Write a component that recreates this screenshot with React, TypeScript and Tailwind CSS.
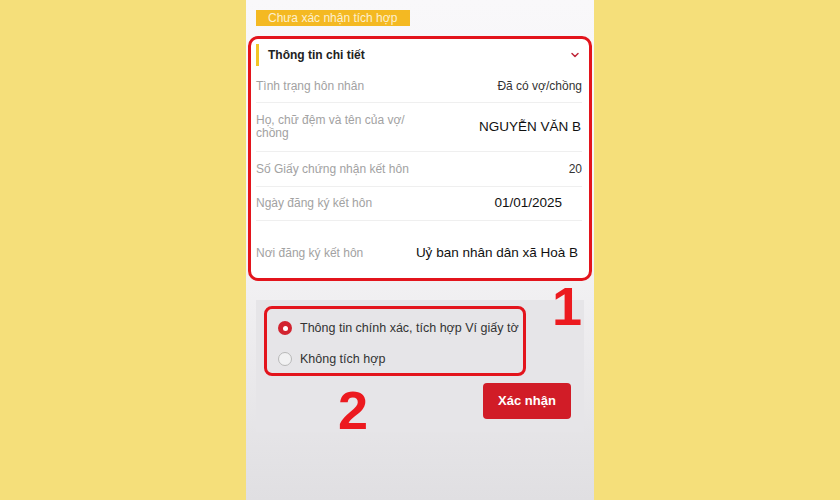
import { FiChevronDown } from "react-icons/fi";

const rows = [
  { label: "Tình trạng hôn nhân", value: "Đã có vợ/chồng", h: "h-[33px]", vc: "text-[12px] text-[#333]" },
  { label: "Họ, chữ đệm và tên của vợ/ chồng", value: "NGUYỄN VĂN B", h: "h-[49px]", vc: "text-[13.5px] text-[#111] pr-[1px]" },
  { label: "Số Giấy chứng nhận kết hôn", value: "20", h: "h-[35px]", vc: "text-[12px] text-[#333]" },
  { label: "Ngày đăng ký kết hôn", value: "01/01/2025", h: "h-[34px]", vc: "text-[13.5px] text-[#111] pr-[20px]" },
];

const Radio = ({ checked, label }: { checked?: boolean; label: string }) => (
  <div className="h-[16px] flex items-center gap-[8px]">
    {checked ? (
      <span className="w-[14px] h-[14px] rounded-full bg-[#d2232f] flex items-center justify-center">
        <span className="w-[5px] h-[5px] rounded-full bg-white" />
      </span>
    ) : (
      <span className="w-[14px] h-[14px] rounded-full border border-[#b8b8b8] bg-[#f1f1f2]" />
    )}
    <span className="text-[12.5px] text-[#333]">{label}</span>
  </div>
);

const App = () => {
  return (
    <div
      className="w-[840px] h-[500px] bg-[#f5df7a] flex justify-center"
      style={{ fontFamily: '"Liberation Sans", "Noto Sans", sans-serif' }}
    >
      <div className="relative w-[348px] h-full bg-gradient-to-b from-[#f9f8fa] via-[#f4f3f5] to-[#e0dfe2] flex flex-col">
        <div className="ml-[10px] mt-[10px] w-[154px] h-[16px] bg-[#f4b922] text-[12px] leading-[16px] text-[#fdf0cf] pl-[12px]">
          Chưa xác nhận tích hợp
        </div>

        {/* khung 1 */}
        <div className="mx-[2px] mt-[10px] h-[245px] rounded-[10px] border-[3px] border-[#e3141c] bg-white flex flex-col pl-[5px]">
          <div className="h-[32px] flex items-center">
            <span className="w-[3px] h-[22px] bg-[#f2c526]" />
            <span className="ml-[9px] text-[12px] font-bold text-[#222] flex-1">Thông tin chi tiết</span>
            <FiChevronDown className="text-[#c0283a] mr-[8px]" size={12} strokeWidth={3} />
          </div>
          <div className="mr-[7px] flex flex-col">
            {rows.map((r) => (
              <div key={r.label} className={`${r.h} flex items-center justify-between border-b border-[#efefef]`}>
                <span className="w-[155px] text-[12px] leading-[13px] text-[#a2a2a2]">{r.label}</span>
                <span className={r.vc}>{r.value}</span>
              </div>
            ))}
            <div className="h-[57px] flex items-center justify-between pt-[7px]">
              <span className="text-[12px] text-[#a2a2a2]">Nơi đăng ký kết hôn</span>
              <span className="text-[13.5px] text-[#111] pr-[4px]">Uỷ ban nhân dân xã Hoà B</span>
            </div>
          </div>
        </div>

        {/* khung 2 */}
        <div className="mx-[10px] mt-[19px] h-[132px] bg-[#e6e5e8] pt-[6px] pl-[8px] flex flex-col">
          <div className="w-[262px] h-[70px] rounded-[8px] border-[3px] border-[#e3141c] flex flex-col gap-[15px] pt-[11px] pl-[11px]">
            <Radio checked label="Thông tin chính xác, tích hợp Ví giấy tờ" />
            <Radio label="Không tích hợp" />
          </div>
          <button className="mt-[7px] ml-[219px] w-[88px] h-[36px] rounded-[4px] bg-[#d11c27] text-white text-[13px] font-bold">
            Xác nhận
          </button>
        </div>

        <span className="absolute left-[306px] top-[279px] text-[54px] leading-none font-bold text-[#ec1a1f]">1</span>
        <span className="absolute left-[92px] top-[383px] text-[54px] leading-none font-bold text-[#ec1a1f]">2</span>
      </div>
    </div>
  );
};

export default App;
